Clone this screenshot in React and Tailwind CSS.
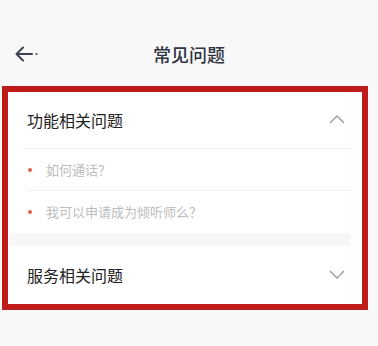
import React from "react";

function Chevron({ up }) {
  return (
    <svg width="16" height="10" viewBox="0 0 16 10" fill="none">
      <path
        d={up ? "M1.5 8.5 L8 2 L14.5 8.5" : "M1.5 1.5 L8 8 L14.5 1.5"}
        stroke="#9a9a9a"
        strokeWidth="1.4"
        strokeLinecap="round"
        strokeLinejoin="round"
      />
    </svg>
  );
}

function Item({ text, divider }) {
  return (
    <div className={`flex items-center h-[42px] ml-[4px] ${divider ? "border-b border-[#efefef]" : ""}`}>
      <span className="w-[4px] h-[4px] rounded-full bg-[#e0604f] ml-[1px]" />
      <span className="ml-[14px] text-[13px] text-[#bcbcbc]">{text}</span>
    </div>
  );
}

export default function App() {
  return (
    <div
      className="w-[378px] h-[346px] bg-[#f8f8f8] overflow-hidden"
      style={{ fontFamily: '"Noto Sans CJK SC", "Noto Sans", sans-serif' }}
    >
      <div className="h-[86px] pt-[43px]">
        <div className="h-[22px] flex items-center px-[15px]">
          <svg width="24" height="16" viewBox="0 0 24 16" fill="none" className="shrink-0">
            <path d="M8 1.5 L1.5 8 L8 14.5" stroke="#3a4150" strokeWidth="2" strokeLinecap="round" strokeLinejoin="round" />
            <path d="M2 8 H17" stroke="#3a4150" strokeWidth="2" strokeLinecap="round" />
            <circle cx="21.5" cy="8" r="1" fill="#3a4150" />
          </svg>
          <div className="flex-1 text-center text-[18px] font-medium text-[#2f3542] leading-[22px] mr-[24px]">常见问题</div>
        </div>
      </div>
      <div className="ml-[2px] w-[366px] border-[6px] border-[#bf1b1b] bg-white">
        <div className="pl-[15px] pr-[11px]">
          <div className="flex items-center justify-between h-[57px] border-b border-[#f0f0f0]">
            <span className="ml-[4px] text-[16px] text-[#222]">功能相关问题</span>
            <span className="mr-[6px] mt-[-2px]"><Chevron up /></span>
          </div>
          <Item text="如何通话？" divider />
          <Item text="我可以申请成为倾听师么？" />
        </div>
        <div className="h-[13px] bg-[#f7f7f7] ml-[2px] mr-[11px]" />
        <div className="pl-[15px] pr-[11px]">
          <div className="flex items-center justify-between h-[58px]">
            <span className="ml-[4px] text-[16px] text-[#222]">服务相关问题</span>
            <span className="mr-[6px]"><Chevron /></span>
          </div>
        </div>
      </div>
    </div>
  );
}
